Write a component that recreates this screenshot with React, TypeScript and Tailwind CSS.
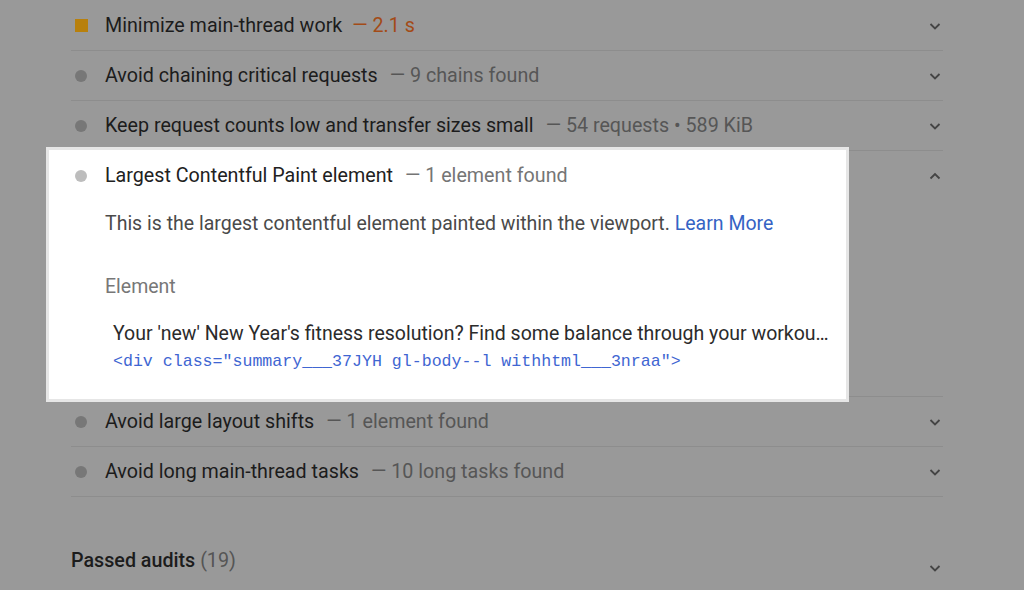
import React from "react";

function Chevron({ up = false, color = "#444" }: { up?: boolean; color?: string }) {
  return (
    <svg width="16" height="16" viewBox="0 0 16 16" className="block">
      <path
        d={up ? "M3.5 10.5 L8 6 L12.5 10.5" : "M3.5 6 L8 10.5 L12.5 6"}
        fill="none"
        stroke={color}
        strokeWidth="1.8"
      />
    </svg>
  );
}

type RowProps = {
  title: string;
  detail: string;
  marker?: "dot" | "square";
  orange?: boolean;
};

function Row({ title, detail, marker = "dot", orange = false }: RowProps) {
  return (
    <div className="flex h-[50px] items-center border-b border-[#8d8d8d]">
      <div className="flex w-[34px] items-center pl-[4px]">
        {marker === "square" ? (
          <div className="h-[13px] w-[13px] bg-[#b8800c]" />
        ) : (
          <div className="h-[12px] w-[12px] rounded-full bg-[#777777]" />
        )}
      </div>
      <div className="flex-1 text-[19.7px] leading-[24px] text-[#1c1c1c]">
        <span>{title}</span>
        <span className={orange ? "ml-[10px] text-[#a34b17]" : "ml-[12px] text-[#565656]"}>
          {detail}
        </span>
      </div>
      <div className="flex w-[16px] items-center justify-center">
        <Chevron />
      </div>
    </div>
  );
}

export default function App() {
  return (
    <div
      className="h-[590px] w-[1024px] overflow-hidden bg-[#999999] pt-[1px]"
      style={{ fontFamily: "Roboto, 'Liberation Sans', sans-serif" }}
    >
      <div className="ml-[71px] w-[872px]">
        <Row title="Minimize main-thread work" detail="— 2.1 s" marker="square" orange />
        <Row title="Avoid chaining critical requests" detail="— 9 chains found" />
        <Row title="Keep request counts low and transfer sizes small" detail="— 54 requests • 589 KiB" />

        {/* Expanded / highlighted audit */}
        <div className="flex items-start border-b border-[#8d8d8d]">
          <div className="relative -mb-[6px] -ml-[25px] -mt-[4px] w-[803px] border-[3px] border-[#e6e6e6] bg-white pb-[27px] pt-[12px]">
            <div className="flex h-[28px] items-center">
              <div className="flex w-[56px] pl-[26px]">
                <div className="h-[12px] w-[12px] rounded-full bg-[#bdbdbd]" />
              </div>
              <div className="text-[19.7px] leading-[24px] text-[#212121]">
                <span>Largest Contentful Paint element</span>
                <span className="ml-[12px] text-[#757575]">— 1 element found</span>
              </div>
            </div>
            <div className="ml-[56px] mt-[20px] text-[19.5px] leading-[28px] text-[#4a4a4a]">
              This is the largest contentful element painted within the viewport.{" "}
              <span className="text-[#3563c4]">Learn More</span>
            </div>
            <div className="ml-[56px] mt-[35px] text-[19.5px] leading-[28px] text-[#777777]">
              Element
            </div>
            <div className="ml-[64px] mt-[19px]">
              <div className="text-[19.5px] leading-[28px] text-[#2b2b2b]">
                Your 'new' New Year's fitness resolution? Find some balance through your workou…
              </div>
              <div
                className="mt-[4px] whitespace-pre text-[16.6px] leading-[20px] text-[#3f66d2]"
                style={{ fontFamily: "'Liberation Mono', 'DejaVu Sans Mono', monospace" }}
              >
                {'<div class="summary___37JYH gl-body--l withhtml___3nraa">'}
              </div>
            </div>
          </div>
          <div className="flex flex-1 justify-end pt-[17px]">
            <Chevron up />
          </div>
        </div>

        <Row title="Avoid large layout shifts" detail="— 1 element found" />
        <Row title="Avoid long main-thread tasks" detail="— 10 long tasks found" />

        <div className="mt-[49px] flex items-center">
          <div className="flex-1 text-[19.7px] font-medium leading-[24px] text-[#1c1c1c]">
            Passed audits <span className="font-normal text-[#555555]">(19)</span>
          </div>
          <div className="mt-[14px]">
            <Chevron />
          </div>
        </div>
      </div>
    </div>
  );
}
